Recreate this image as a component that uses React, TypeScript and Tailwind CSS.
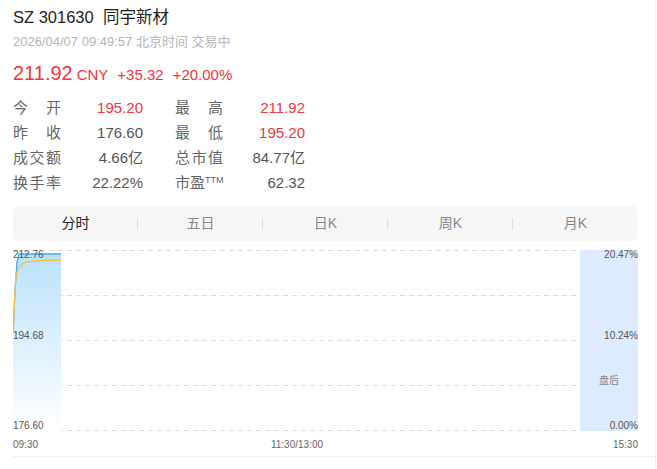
import React from "react";

const stats = [
  ["今开", "195.20", true, "最高", "211.92", true],
  ["昨收", "176.60", false, "最低", "195.20", true],
  ["成交额", "4.66亿", false, "总市值", "84.77亿", false],
  ["换手率", "22.22%", false, "市盈TTM", "62.32", false],
];

const tabs = ["分时", "五日", "日K", "周K", "月K"];

const Label = ({ text }: { text: string }) => {
  if (text === "市盈TTM") {
    return (
      <span className="w-[48px] whitespace-nowrap">
        市盈<span className="text-[9px] relative top-[-5px]">TTM</span>
      </span>
    );
  }
  return <span className="w-[48px] [text-align-last:justify]">{text}</span>;
};

const Chart = () => {
  const gridY = [250, 295, 340, 385, 430];
  return (
    <svg width="655" height="216" viewBox="0 240 655 216" className="block">
      <defs>
        <linearGradient id="area" x1="0" y1="0" x2="0" y2="1">
          <stop offset="0" stopColor="#b9e2fb" />
          <stop offset="1" stopColor="#ffffff" />
        </linearGradient>
      </defs>
      <rect x="580" y="250" width="58" height="181" fill="#dcebfd" />
      {gridY.map((y) => (
        <line key={y} x1="13" x2="580" y1={y + 0.5} y2={y + 0.5} stroke="#dcdcdc" strokeDasharray="5 4" />
      ))}
      <path d="M13 431 L13 325 L15 290 L17 262 L19 254 L61 254 L61 431 Z" fill="url(#area)" />
      <path d="M13.5 325 L15 290 L17 262 L19 254 L61 254" fill="none" stroke="#42aaf5" strokeWidth="1.3" />
      <path d="M13.5 332 L14.5 300 L16 275 Q19 264 26 262 Q40 260 61 260" fill="none" stroke="#f5c242" strokeWidth="1.3" />
      <g fontFamily="'Liberation Sans', Arial, sans-serif" fontSize="10" fill="#555">
        <text x="13" y="258">212.76</text>
        <text x="13" y="339">194.68</text>
        <text x="13" y="429">176.60</text>
        <text x="638" y="258" textAnchor="end">20.47%</text>
        <text x="638" y="339" textAnchor="end">10.24%</text>
        <text x="638" y="429" textAnchor="end">0.00%</text>
        <text x="609" y="384" textAnchor="middle" fill="#888" fontFamily="'Noto Sans CJK SC', sans-serif">盘后</text>
        <text x="13" y="448" fill="#666">09:30</text>
        <text x="297" y="448" fill="#666" textAnchor="middle">11:30/13:00</text>
        <text x="638" y="448" fill="#666" textAnchor="end">15:30</text>
      </g>
    </svg>
  );
};

export default function App() {
  return (
    <div className="w-[656px] h-[469px] bg-white border-r border-[#eeeeee] font-['Liberation_Sans','Noto_Sans_CJK_SC',sans-serif] overflow-hidden">
      <div className="pl-[13px] pt-[6px]">
        <div className="text-[16.5px] leading-[22px] text-[#222]">
          SZ 301630&nbsp;&nbsp;同宇新材
        </div>
        <div className="mt-[5px] text-[13px] leading-[18px] text-[#b4b4b4]">
          2026/04/07 09:49:57 北京时间 交易中
        </div>
        <div className="mt-[9px] flex items-baseline text-[#f4333c] leading-[26px]">
          <span className="text-[20px]">211.92</span>
          <span className="ml-[4px] text-[15px]">CNY</span>
          <span className="ml-[9px] text-[15px]">+35.32</span>
          <span className="ml-[9px] text-[15px]">+20.00%</span>
        </div>
        <div className="mt-[8px] flex flex-col">
          {stats.map((r) => (
            <div key={r[0] as string} className="flex items-center h-[25px] text-[15px] text-[#666]">
              <Label text={r[0] as string} />
              <span className={"w-[82px] text-right " + (r[2] ? "text-[#f4333c]" : "text-[#555]")}>{r[1] as string}</span>
              <span className="ml-[32px] flex">
                <Label text={r[3] as string} />
              </span>
              <span className={"w-[82px] text-right " + (r[5] ? "text-[#f4333c]" : "text-[#555]")}>{r[4] as string}</span>
            </div>
          ))}
        </div>
        <div className="mt-[10px] w-[625px] h-[35px] rounded-[6px] bg-[#f6f6f6] flex items-center">
          {tabs.map((t, i) => (
            <div key={t} className="flex-1 flex items-center relative h-full">
              <span className={"flex-1 text-center text-[14px] " + (i === 0 ? "text-[#222]" : "text-[#888]")}>{t}</span>
              {i < tabs.length - 1 && <span className="absolute right-0 w-px h-[12px] bg-[#dedede]" />}
            </div>
          ))}
        </div>
      </div>
      <div className="mt-[-1px]">
        <Chart />
      </div>
      <div className="ml-[13px] border-t border-[#eeeeee]" />
    </div>
  );
}
